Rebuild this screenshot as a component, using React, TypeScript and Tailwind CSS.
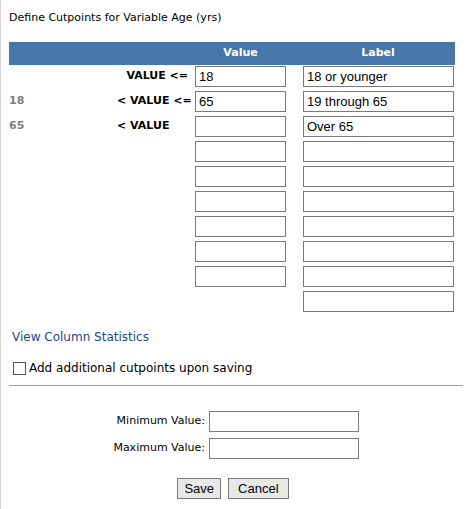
import React from 'react';

const rows = [
  { low: '', op: 'VALUE <=', opAlign: 'justify-end pr-[7px]', value: '18', label: '18 or younger' },
  { low: '18', op: '< VALUE <=', opAlign: 'justify-start', value: '65', label: '19 through 65' },
  { low: '65', op: '< VALUE', opAlign: 'justify-start', value: '', label: 'Over 65' },
  { low: '', op: '', opAlign: '', value: '', label: '' },
  { low: '', op: '', opAlign: '', value: '', label: '' },
  { low: '', op: '', opAlign: '', value: '', label: '' },
  { low: '', op: '', opAlign: '', value: '', label: '' },
  { low: '', op: '', opAlign: '', value: '', label: '' },
  { low: '', op: '', opAlign: '', value: '', label: '' },
  { low: '', op: '', opAlign: '', value: '', label: '' },
];

const box = 'h-[21px] border border-[#7a7a7a] bg-white px-[3px] text-[13px] leading-[19px] text-black';
const arial = { fontFamily: '"Liberation Sans", Arial, sans-serif' };

export default function App() {
  return (
    <div className="w-[471px] h-[509px] bg-white border-l border-[#d4d4d4] text-[11px] text-black" style={{ fontFamily: '"DejaVu Sans", Verdana, sans-serif' }}>
      <div className="pl-[8px] pt-[10px] h-[42px] text-[11px]">Define Cutpoints for Variable Age (yrs)</div>
      <div className="ml-[8px] w-[446px] h-[23px] bg-[#4677a8] flex items-center font-bold text-white">
        <div className="w-[186px]" />
        <div className="w-[91px] text-center">Value</div>
        <div className="w-[17px]" />
        <div className="w-[150px] text-center">Label</div>
      </div>
      <div className="ml-[8px] flex flex-col gap-[4px] pt-[1px]">
        {rows.map((r, i) => (
          <div key={i} className="flex items-center h-[21px]">
            <div className="w-[108px] font-bold text-[#808080]">{r.low}</div>
            <div className={`w-[78px] flex font-bold whitespace-nowrap ${r.opAlign}`}>{r.op}</div>
            {i < 9 ? (
              <div className={`w-[91px] ${box}`} style={arial}>{r.value}</div>
            ) : (
              <div className="w-[91px]" />
            )}
            <div className="w-[17px]" />
            <div className={`w-[151px] ${box}`} style={arial}>{r.label}</div>
          </div>
        ))}
      </div>
      <div className="pl-[11px] pt-[16px] text-[12px] text-[#24478f]">View Column Statistics</div>
      <label className="flex items-center pl-[12px] pt-[13px] text-[12px]">
        <span className="w-[13px] h-[13px] border border-[#555] bg-white mr-[3px]" />
        Add additional cutpoints upon saving
      </label>
      <div className="ml-[8px] mt-[8px] w-[454px] border-t border-[#a0a0a0]" />
      <div className="flex flex-col gap-[6px] pt-[25px]">
        {['Minimum Value:', 'Maximum Value:'].map((l) => (
          <div key={l} className="flex items-center">
            <div className="w-[208px] text-right pr-[4px]">{l}</div>
            <div className="w-[150px] h-[21px] border border-[#7a7a7a] bg-white" />
          </div>
        ))}
      </div>
      <div className="flex justify-center gap-[7px] pt-[19px] pr-[6px]" style={arial}>
        <button className="h-[21px] px-[6px] bg-[#e8e8e8] border border-[#7a7a7a] text-[13px]">Save</button>
        <button className="h-[21px] px-[9px] bg-[#e8e8e8] border border-[#7a7a7a] text-[13px]">Cancel</button>
      </div>
    </div>
  );
}
